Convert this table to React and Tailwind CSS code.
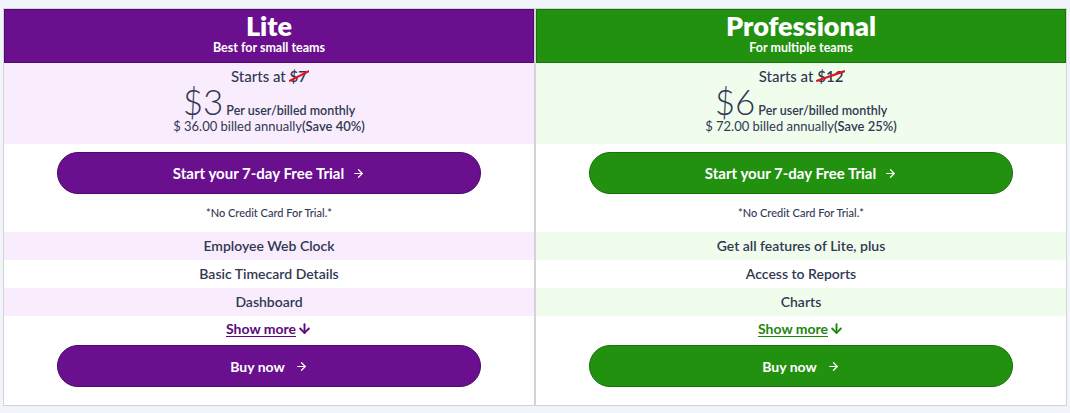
import React from "react";
import { ArrowRight, ArrowDown } from "lucide-react";

const plans = [
  {
    name: "Lite",
    sub: "Best for small teams",
    old: "$7",
    price: "$3",
    annual: "$ 36.00 billed annually",
    save: "(Save 40%)",
    features: ["Employee Web Clock", "Basic Timecard Details", "Dashboard"],
    header: "bg-[#6a0f8e] border-[#4e0969]",
    soft: "bg-[#f8ecfd]",
    btn: "bg-[#6a0f8e] border-[#4e0969]",
    link: "text-[#5c0a7c] decoration-[#5c0a7c]",
  },
  {
    name: "Professional",
    sub: "For multiple teams",
    old: "$12",
    price: "$6",
    annual: "$ 72.00 billed annually",
    save: "(Save 25%)",
    features: ["Get all features of Lite, plus", "Access to Reports", "Charts"],
    header: "bg-[#22910f] border-[#17720a]",
    soft: "bg-[#f0fdec]",
    btn: "bg-[#22910f] border-[#17720a]",
    link: "text-[#1e870d] decoration-[#1e870d]",
  },
];

function Card({ p }) {
  return (
    <div className="flex flex-col border border-[#d4d4d8] bg-white">
      <div className={`h-[54px] border ${p.header} flex flex-col items-center pt-[2px] text-white`}>
        <div className="text-[27px] font-extrabold leading-[28px]">{p.name}</div>
        <div className="text-[12.5px] font-bold leading-[14px] mt-[1px]">{p.sub}</div>
      </div>
      <div className={`${p.soft} h-[81px] flex flex-col items-center pt-[4px] text-[#313853]`}>
        <div className="text-[15px] leading-[19px] font-medium">
          Starts at{" "}
          <span className="relative inline-block font-semibold">
            {p.old}
            <svg className="absolute left-[-1px] top-[3px] w-[calc(100%+3px)] h-[12px]" viewBox="0 0 20 12" preserveAspectRatio="none">
              <line x1="0" y1="11" x2="20" y2="1" stroke="#e0141e" strokeWidth="2" />
            </svg>
          </span>
        </div>
        <div className="text-[35px] leading-[28px] h-[28px] mt-[1px] whitespace-nowrap">
          <span className="font-light">{p.price}</span>
          <span className="text-[12.5px] leading-none font-semibold ml-[3px]">Per user/billed monthly</span>
        </div>
        <div className="text-[13px] leading-[16px] mt-[3px]">
          {p.annual}
          <span className="font-semibold">{p.save}</span>
        </div>
      </div>
      <div className="flex flex-col items-center">
        <button className={`mt-[8px] w-4/5 h-[42px] rounded-full border ${p.btn} text-white text-[15px] font-bold flex items-center justify-center gap-[8px]`}>
          Start your 7-day Free Trial
          <ArrowRight size={13} strokeWidth={2.2} />
        </button>
        <div className="mt-[12px] text-[11px] leading-[14px] text-[#313853] font-medium">*No Credit Card For Trial.*</div>
      </div>
      <div className="mt-[12px] flex flex-col text-[14px] font-semibold text-[#313853] text-center">
        {p.features.map((f, i) => (
          <div key={f} className={`h-[28px] leading-[28px] ${i % 2 === 0 ? p.soft : "bg-white"}`}>
            {f}
          </div>
        ))}
      </div>
      <div className="flex flex-col items-center pb-[18px]">
        <a className={`h-[24px] flex items-center text-[14px] font-bold underline underline-offset-2 ${p.link}`}>
          Show more
          <ArrowDown size={15} strokeWidth={3} className="ml-[1px]" />
        </a>
        <button className={`mt-[5px] w-4/5 h-[42px] rounded-full border ${p.btn} text-white text-[14px] font-bold flex items-center justify-center gap-[10px]`}>
          Buy now
          <ArrowRight size={13} strokeWidth={2.2} />
        </button>
      </div>
    </div>
  );
}

export default function App() {
  return (
    <div
      className="min-h-[413px] bg-[#f1f5fb] pt-[8px] pl-[3px] pr-[3px] pb-[7px]"
      style={{ fontFamily: "Lato, 'Noto Sans', sans-serif" }}
    >
      <div className="grid grid-cols-2">
        {plans.map((p) => (
          <Card key={p.name} p={p} />
        ))}
      </div>
    </div>
  );
}
